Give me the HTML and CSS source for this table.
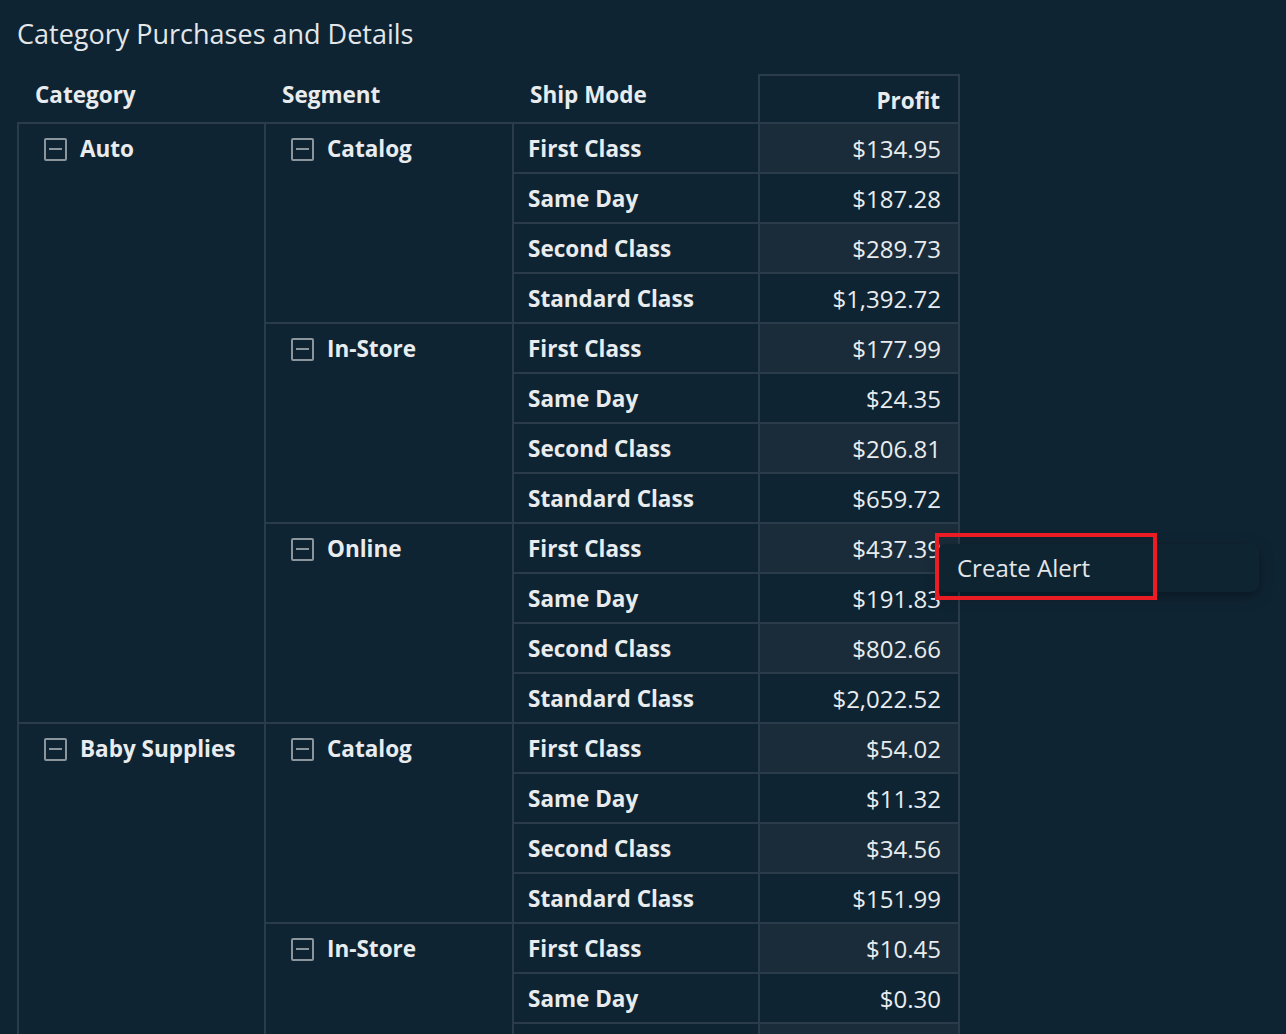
FILE: index.html
```html
<!DOCTYPE html>
<html>
<head>
<meta charset="utf-8">
<link rel="stylesheet" href="styles.css">
</head>
<body>
<div class="page">
  <h1 class="title">Category Purchases and Details</h1>
  <table class="pivot">
    <colgroup>
      <col class="c-cat"><col class="c-seg"><col class="c-ship"><col class="c-profit">
    </colgroup>
    <thead>
      <tr class="head-row">
        <th class="h-dim">Category</th>
        <th class="h-dim">Segment</th>
        <th class="h-dim">Ship Mode</th>
        <th class="h-profit">Profit</th>
      </tr>
    </thead>
    <tbody>
      <tr class="odd">
        <td class="dim" rowspan="12"><span class="lbl"><span class="tog"></span>Auto</span></td>
        <td class="dim" rowspan="4"><span class="lbl"><span class="tog"></span>Catalog</span></td>
        <td class="ship">First Class</td><td class="val">$134.95</td>
      </tr>
      <tr class="even"><td class="ship">Same Day</td><td class="val">$187.28</td></tr>
      <tr class="odd"><td class="ship">Second Class</td><td class="val">$289.73</td></tr>
      <tr class="even"><td class="ship">Standard Class</td><td class="val">$1,392.72</td></tr>
      <tr class="odd">
        <td class="dim" rowspan="4"><span class="lbl"><span class="tog"></span>In-Store</span></td>
        <td class="ship">First Class</td><td class="val">$177.99</td>
      </tr>
      <tr class="even"><td class="ship">Same Day</td><td class="val">$24.35</td></tr>
      <tr class="odd"><td class="ship">Second Class</td><td class="val">$206.81</td></tr>
      <tr class="even"><td class="ship">Standard Class</td><td class="val">$659.72</td></tr>
      <tr class="odd">
        <td class="dim" rowspan="4"><span class="lbl"><span class="tog"></span>Online</span></td>
        <td class="ship">First Class</td><td class="val">$437.39</td>
      </tr>
      <tr class="even"><td class="ship">Same Day</td><td class="val">$191.83</td></tr>
      <tr class="odd"><td class="ship">Second Class</td><td class="val">$802.66</td></tr>
      <tr class="even"><td class="ship">Standard Class</td><td class="val">$2,022.52</td></tr>
      <tr class="odd">
        <td class="dim" rowspan="7"><span class="lbl"><span class="tog"></span>Baby Supplies</span></td>
        <td class="dim" rowspan="4"><span class="lbl"><span class="tog"></span>Catalog</span></td>
        <td class="ship">First Class</td><td class="val">$54.02</td>
      </tr>
      <tr class="even"><td class="ship">Same Day</td><td class="val">$11.32</td></tr>
      <tr class="odd"><td class="ship">Second Class</td><td class="val">$34.56</td></tr>
      <tr class="even"><td class="ship">Standard Class</td><td class="val">$151.99</td></tr>
      <tr class="odd">
        <td class="dim" rowspan="3"><span class="lbl"><span class="tog"></span>In-Store</span></td>
        <td class="ship">First Class</td><td class="val">$10.45</td>
      </tr>
      <tr class="even"><td class="ship">Same Day</td><td class="val">$0.30</td></tr>
      <tr class="odd"><td class="ship"></td><td class="val"></td></tr>
    </tbody>
  </table>
</div>
<div class="menu"><div class="menu-item">Create Alert</div></div>
<div class="highlight"></div>
</body>
</html>
```

FILE: styles.css
```css
html, body {
  margin: 0;
  padding: 0;
  background: #0f2433;
  height: 1034px;
  overflow: hidden;
}
body {
  font-family: "Open Sans", "Noto Sans", sans-serif;
  color: #e9ecee;
  position: relative;
}
.page {
  padding: 17px 0 0 17px;
}
.title {
  margin: 0 0 24px 0;
  font-size: 27px;
  line-height: 33px;
  font-weight: 400;
  color: #e3e7ea;
}
.pivot {
  border-collapse: collapse;
  table-layout: fixed;
  width: 941px;
  font-size: 22.5px;
  line-height: 26px;
}
.c-cat { width: 247px; }
.c-seg { width: 248px; }
.c-ship { width: 246px; }
.c-profit { width: 200px; }
.head-row {
  height: 48px;
}
.pivot th {
  font-weight: 700;
  text-align: left;
  padding: 0;
}
.h-dim {
  border: none;
  vertical-align: top;
  padding: 7px 0 0 17px !important;
}
.h-profit {
  border: 2px solid #2a3c4a;
  border-bottom: none;
  text-align: right !important;
  vertical-align: bottom;
  padding: 0 18px 8px 0 !important;
}
.pivot td {
  border: 2px solid #2a3c4a;
  height: 46px;
  padding: 2px 0 0 0;
}
.dim {
  vertical-align: top;
  padding: 12px 0 0 25px !important;
  font-weight: 700;
}
.lbl {
  display: flex;
  align-items: center;
  gap: 13px;
}
.lbl-text {
  display: block;
}
.tog {
  box-sizing: border-box;
  width: 23px;
  height: 23px;
  border: 2px solid #8a959c;
  border-radius: 2px;
  position: relative;
  flex: none;
}
.tog::after {
  content: "";
  position: absolute;
  left: 3px;
  right: 3px;
  top: 8.5px;
  height: 2px;
  background: #8a959c;
}
.ship {
  font-weight: 700;
  padding-left: 14px !important;
}
.val {
  text-align: right;
  padding-right: 17px !important;
  font-weight: 400;
  font-size: 24px;
}
tr.odd .val {
  background: #1a2c3a;
}
.menu {
  position: absolute;
  left: 938px;
  top: 544px;
  width: 321px;
  height: 48px;
  background: #0f2431;
  border-radius: 8px;
  box-shadow: 0 4px 14px rgba(0, 0, 0, 0.35);
  display: flex;
  align-items: center;
}
.menu-item {
  padding-left: 19px;
  font-size: 24px;
  line-height: 28px;
  color: #e3e7ea;
}
.highlight {
  position: absolute;
  left: 935px;
  top: 533px;
  width: 222px;
  height: 67px;
  box-sizing: border-box;
  border: 4px solid #ec1c24;
}
```
